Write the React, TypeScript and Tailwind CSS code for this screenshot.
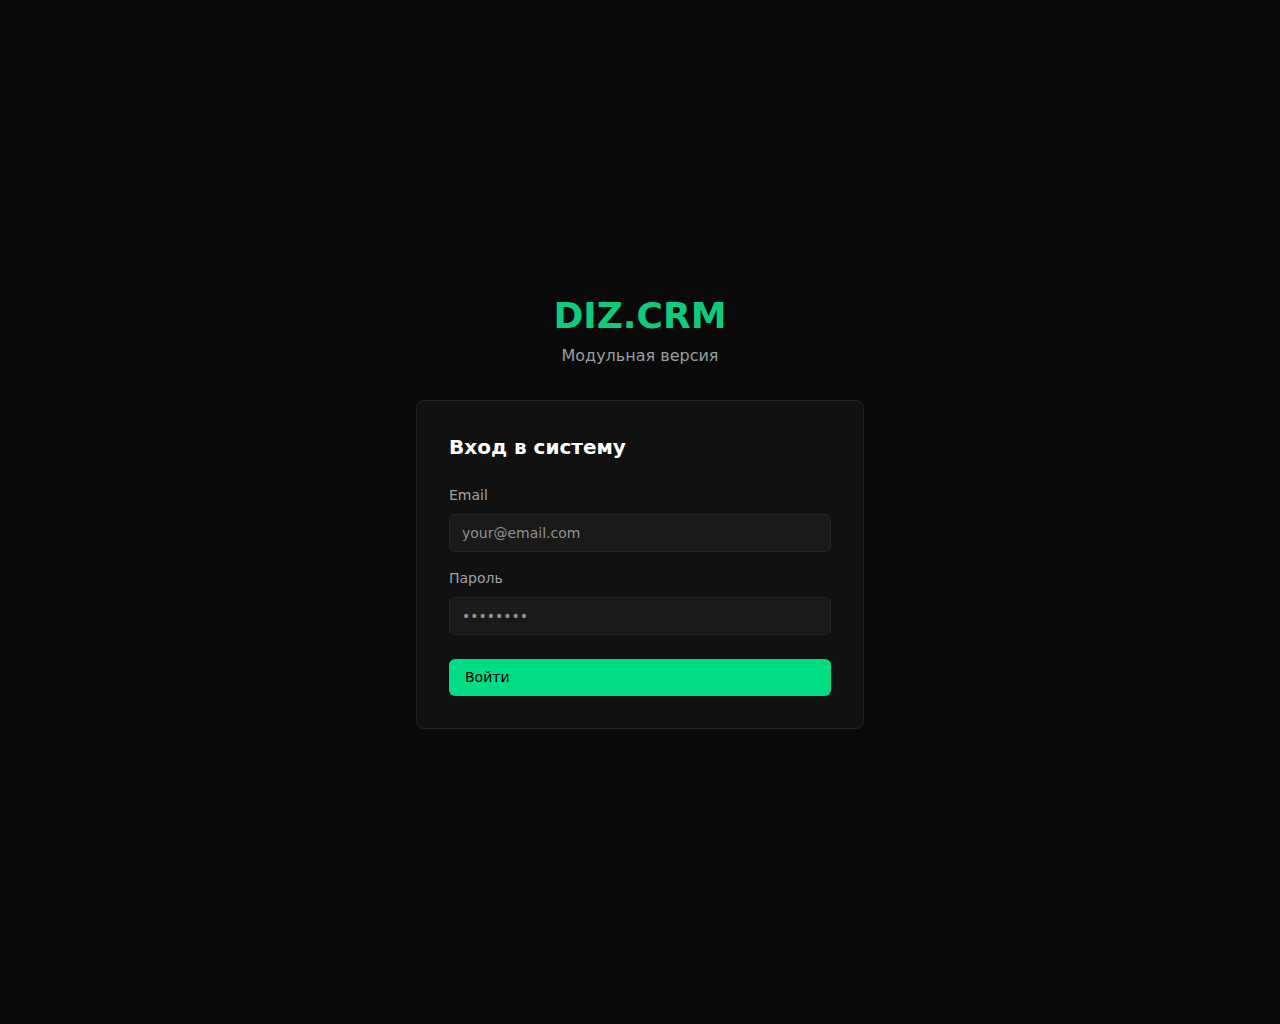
export default function App() {
  return (
    <div
      className="flex min-h-screen items-center justify-center bg-[#0a0a0a] px-4"
      style={{ fontFamily: '"DejaVu Sans", sans-serif' }}
    >
      <div className="w-full max-w-md">
        {/* Brand */}
        <div className="mb-8 text-center">
          <h1 className="text-4xl font-bold text-[#10cb7c]">DIZ.CRM</h1>
          <p className="mt-2 text-base text-[#9a9ca3]">Модульная версия</p>
        </div>

        {/* Login card */}
        <div className="rounded-lg border border-[#232323] bg-[#111111] p-8">
          <h2 className="mb-6 text-xl font-bold text-white">Вход в систему</h2>
          <form className="space-y-4" onSubmit={(e) => e.preventDefault()}>
            <div>
              <label className="mb-2 block text-sm leading-[21px] text-[#9ea1a8]">Email</label>
              <input
                type="email"
                placeholder="your@email.com"
                className="block w-full rounded-md border border-[#262626] bg-[#1a1a1a] px-3 py-2 text-sm text-white placeholder-[#8f9198] outline-none"
              />
            </div>
            <div>
              <label className="mb-2 block text-sm leading-[21px] text-[#9ea1a8]">Пароль</label>
              <input
                type="password"
                placeholder="••••••••"
                className="block w-full rounded-md border border-[#262626] bg-[#1a1a1a] px-3 py-2 text-sm text-white placeholder-[#8f9198] outline-none"
              />
            </div>
            <div className="pt-2">
              <button
                type="submit"
                className="block h-[37px] w-full rounded-md bg-[#00dc84] px-4 text-left text-sm text-black"
              >
                Войти
              </button>
            </div>
          </form>
        </div>
      </div>
    </div>
  );
}
